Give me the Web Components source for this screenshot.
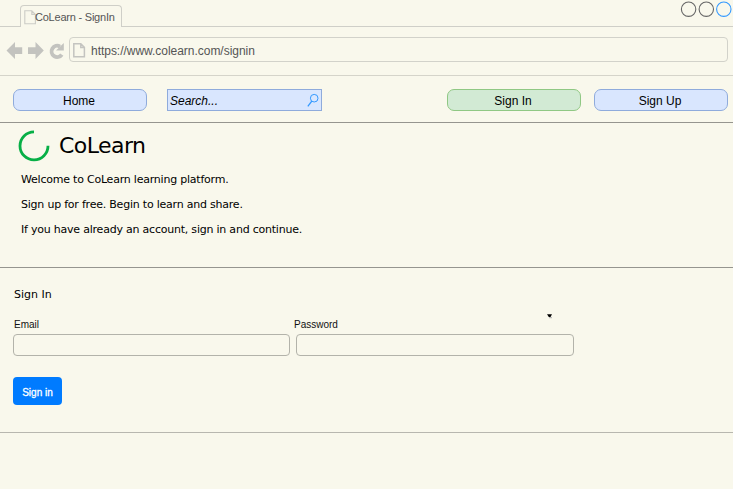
<!DOCTYPE html>
<html lang="en">
<head>
<meta charset="utf-8">
<title>CoLearn - SignIn</title>
<style>
html,body{margin:0;height:100%;background:#f9f8ec;overflow:hidden}
body{font-family:"Liberation Sans",Arial,sans-serif;color:#000}
</style>
</head>
<body>
<co-page></co-page>
<script>
const define = (name, html) => customElements.define(name, class extends HTMLElement {
  constructor() {
    super();
    const t = document.createElement('template');
    t.innerHTML = html;
    this.attachShadow({mode: 'open'}).append(t.content.cloneNode(true));
  }
});

define('page-icon', `
<style>:host{display:block;width:13px;height:15px;flex:none}svg{display:block;overflow:visible}</style>
<svg width="13" height="15" fill="none" stroke="currentColor" stroke-width="var(--w)"><path d="M.8.8H7.8L11.4 4.4V13.8H.8ZM7.8.8V4.4H11.4"/></svg>`);

define('window-controls', `
<style>:host{display:block}svg{display:block}</style>
<svg width="53" height="18" fill="none" stroke="#666" stroke-width="1.1"><circle cx="8.6" cy="9.2" r="7.2"/><circle cx="26.3" cy="9.2" r="7.2"/><circle cx="43.8" cy="9.2" r="7.2" stroke="#3399ff"/></svg>`);

define('tab-bar', `
<style>
:host{display:flex;box-sizing:border-box;height:27px;align-items:flex-start;justify-content:space-between;padding-left:20px;background:linear-gradient(#cfcfc8,#cfcfc8) 0 100%/100% 1px no-repeat}
.tab{box-sizing:border-box;width:102px;height:22px;margin-top:5px;border:1px solid #cfcfc8;border-bottom:0;border-radius:4px 4px 0 0;background:#f9f8ec;display:flex;padding:4px 0 0 3px;color:#ccccc6;--w:1.1px}
page-icon{width:11px}
span{font-size:11px;line-height:14px;color:#555;white-space:nowrap;letter-spacing:-.22px}
</style>
<div class="tab"><page-icon></page-icon><span><slot></slot></span></div>
<window-controls></window-controls>`);

define('address-bar', `
<style>
:host{display:flex;box-sizing:border-box;height:49px;padding:10px 5px 0 6px;border-bottom:1px solid #d5d4ca}
svg{display:block;flex:none}
.url{flex:1;box-sizing:border-box;height:25px;border:1px solid #d2d2ca;border-radius:4px;display:flex;padding:5px 0 0 3px;gap:5px;color:#c4c4c0;--w:1.5px}
span{font-size:12px;line-height:17px;color:#555;white-space:nowrap;letter-spacing:-.03px}
</style>
<svg width="63" height="25" viewBox="6 37 63 25" fill="#c3c3bf">
<path d="M6.5 50.5 15 42V47.2H22.2V54H15V59Z"/><path d="M43.8 50.5 35.5 42V47.2H28V54H35.5V59Z"/>
<path d="M61.8 54.6A5.6 5.6 0 1 1 60 46.6" fill="none" stroke="#c3c3bf" stroke-width="3.9"/><path d="M63.8 43V50.6H56Z"/></svg>
<div class="url"><page-icon></page-icon><span><slot></slot></span></div>`);

define('nav-button', `
<style>
:host{display:block;box-sizing:border-box;width:134px;height:22px;border:1px solid #8fabdc;border-radius:7px;background:#d9e6fe;font-size:12px;line-height:22px;text-align:center;padding-right:2px}
:host([active]){background:#d2ead4;border-color:#90c884}
</style><slot></slot>`);

define('search-box', `
<style>
:host{display:flex;box-sizing:border-box;width:155px;height:22px;border:1px solid #8fabdc;background:#d9e6fe;padding:0 2px;justify-content:space-between;font-size:12px;font-style:italic;line-height:22px}
svg{display:block;margin-top:3px}
</style>
<span><slot></slot></span>
<svg width="12" height="15" fill="none" stroke="#3399ff"><circle cx="7.2" cy="5.2" r="3.8"/><path d="M4.8 8.2.8 13.4" stroke-width="1.3"/></svg>`);

define('nav-bar', `
<style>
:host{display:flex;box-sizing:border-box;height:47px;padding:13px 5px 0 13px;border-bottom:1px solid #96958f}
search-box{margin:0 auto 0 20px}
.last{margin-left:13px}
</style>
<nav-button>Home</nav-button><search-box>Search...</search-box>
<nav-button active>Sign In</nav-button><nav-button class="last">Sign Up</nav-button>`);

define('hero-panel', `
<style>
:host{display:block;box-sizing:border-box;height:145px;padding:7px 0 0 18px;border-bottom:1px solid #96958f;font-family:Verdana,"DejaVu Sans",sans-serif}
header{display:flex;gap:9px}
svg{display:block;flex:none}
h1{margin:0;font-size:22px;font-weight:400;line-height:31px;white-space:nowrap;letter-spacing:-.55px}
.copy{padding:5px 0 0 3px;font-size:11px;line-height:25px;white-space:nowrap;letter-spacing:-.22px}
::slotted(p){margin:0!important}
</style>
<header><svg width="32" height="32" fill="none" stroke="#07af46" stroke-width="2.8"><path d="M16 1.9A14 14 0 1 0 30 15.8"/></svg><h1>CoLearn</h1></header>
<div class="copy"><slot></slot></div>`);

define('text-field', `
<style>
:host{display:block;font-size:10px;color:#111}
label{display:block;line-height:16px;height:17px;white-space:nowrap;padding-left:1px}
:host(.second) label{padding:0;margin-left:-2px}
input{display:block;box-sizing:border-box;width:var(--field,277px);height:22px;border:1px solid #b3b3aa;border-radius:4px;background:transparent;margin:0;padding:0 4px;outline:0}
</style><label><slot></slot></label><input>`);

define('sign-form', `
<style>
:host{display:block;box-sizing:border-box;height:165px;padding:19px 0 0 13px;border-bottom:1px solid #b8b7af;position:relative}
h2{margin:0 0 9px 1px;font:400 11px/15px Verdana,"DejaVu Sans",sans-serif}
.fields{display:flex;gap:6px;padding-top:6px}
.second{--field:278px}
.caret{position:absolute;left:546px;top:45px}
button{display:block;margin:21px 0 0;box-sizing:border-box;width:49px;height:28px;border:0;border-radius:4px;background:#007bff;color:#fff;font:10px/29px "Liberation Sans",Arial,sans-serif;padding:1px 0 0;-webkit-text-stroke:.3px #fff}
</style>
<h2>Sign In</h2>
<svg class="caret" width="8" height="7"><path d="M1 1.2H6L4.5 4H2.8Z"/><path d="M3 4.7H6" stroke="#aaa"/></svg>
<div class="fields"><text-field>Email</text-field><text-field class="second">Password</text-field></div>
<button>Sign in</button>`);

define('co-page', `
<style>:host{display:flex;flex-direction:column;height:489px}</style>
<tab-bar>CoLearn - SignIn</tab-bar>
<address-bar>https://www.colearn.com/signin</address-bar>
<nav-bar></nav-bar>
<hero-panel><p>Welcome to CoLearn learning platform.</p><p>Sign up for free. Begin to learn and share.</p><p>If you have already an account, sign in and continue.</p></hero-panel>
<sign-form></sign-form>`);
</script>
</body>
</html>
